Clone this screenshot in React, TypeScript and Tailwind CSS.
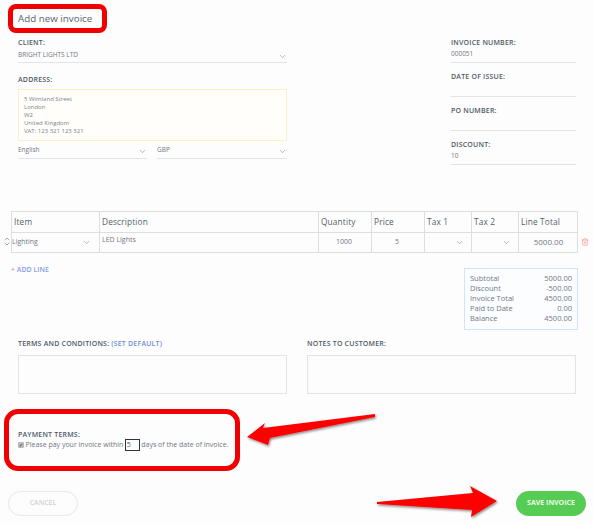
import { ChevronDown, ChevronUp, Trash2 } from "lucide-react";

const labelCls = "h-[10px] text-[7px] leading-[12px] font-semibold tracking-[0.2px] text-[#4f5a66]";
const valueCls = "text-[6.5px] leading-[12px] text-[#727884]";

function Field({ label, value }: { label: string; value?: string }) {
  return (
    <div className="mb-[8px]">
      <div className={labelCls}>{label}</div>
      <div className={`h-[16px] border-b border-[#e4e4e4] pt-[1px] ${valueCls}`}>{value}</div>
    </div>
  );
}

function SelectLine({ value, className }: { value: string; className: string }) {
  return (
    <div className={`flex h-[18px] items-center justify-between border-b border-[#e4e4e4] pt-[1px] ${className}`}>
      <span className={valueCls}>{value}</span>
      <ChevronDown size={9} strokeWidth={1.2} className="mt-[3px] text-[#666]" />
    </div>
  );
}

const headers = ["Item", "Description", "Quantity", "Price", "Tax 1", "Tax 2", "Line Total"];
const totals = [
  ["Subtotal", "5000.00"],
  ["Discount", "-500.00"],
  ["Invoice Total", "4500.00"],
  ["Paid to Date", "0.00"],
  ["Balance", "4500.00"],
];

export default function App() {
  const cell = "flex items-center border-r border-[#dedede] last:border-r-0";
  return (
    <div className="relative h-[523px] w-[594px] overflow-hidden bg-[#fdfdfd] font-['Open_Sans',sans-serif]">
      <div className="pl-[18px] pt-[12px]">
        <h1 className="h-[14px] text-[9.8px] leading-[14px] font-normal text-[#5a6470]">Add new invoice</h1>
      </div>

      <div className="mt-[11px] flex pl-[18px]">
        <div className="w-[269px]">
          <div className={labelCls}>CLIENT:</div>
          <div className="flex h-[16px] items-center justify-between border-b border-[#e4e4e4]">
            <span className={valueCls}>BRIGHT LIGHTS LTD</span>
            <ChevronDown size={9} strokeWidth={1.2} className="mt-[3px] text-[#666]" />
          </div>
          <div className={`mt-[11px] ${labelCls}`}>ADDRESS:</div>
          <div className="mt-[5px] h-[52px] border border-[#fcefc9] bg-[#fffefa] pl-[5px] pt-[5px] text-[6px] leading-[8px] text-[#7c8490]">
            <div>5 Wimland Street</div>
            <div>London</div>
            <div>W2</div>
            <div>United Kingdom</div>
            <div>VAT: 123 321 123 321</div>
          </div>
          <div className="flex gap-[10px]">
            <SelectLine value="English" className="w-[129px]" />
            <SelectLine value="GBP" className="w-[130px]" />
          </div>
        </div>
        <div className="ml-[164px] w-[125px]">
          <Field label="INVOICE NUMBER:" value="000051" />
          <Field label="DATE OF ISSUE:" />
          <Field label="PO NUMBER:" />
          <Field label="DISCOUNT:" value="10" />
        </div>
      </div>

      <div className="relative ml-[11px] mt-[38px] w-[567px] border border-[#dedede]">
        <div className="grid h-[21px] grid-cols-[88px_219px_53px_53px_47px_47px_59px] border-b border-[#dedede]">
          {headers.map((h) => (
            <div key={h} className={`${cell} pl-[2px] text-[8.3px] font-medium tracking-[0.15px] text-[#555d66]`}>{h}</div>
          ))}
        </div>
        <div className="grid h-[19px] grid-cols-[88px_219px_53px_53px_47px_47px_59px] text-[7px] text-[#727884]">
          <div className={`${cell} justify-between pb-[1px] pr-[8px]`}>
            <span>Lighting</span>
            <ChevronDown size={9} strokeWidth={1.2} className="text-[#666]" />
          </div>
          <div className={`${cell} !items-start pl-[2px] pt-[2px]`}>LED Lights</div>
          <div className={`${cell} justify-center pb-[1px] pr-[2px]`}>1000</div>
          <div className={`${cell} justify-center pb-[1px] pr-[2px]`}>5</div>
          <div className={`${cell} justify-end pb-[1px] pr-[7px]`}>
            <ChevronDown size={9} strokeWidth={1.2} className="text-[#666]" />
          </div>
          <div className={`${cell} justify-end pb-[1px] pr-[7px]`}>
            <ChevronDown size={9} strokeWidth={1.2} className="text-[#666]" />
          </div>
          <div className={`${cell} justify-center pb-[1px] text-[8px]`}>5000.00</div>
        </div>
        <div className="absolute left-[-9px] top-[23px] flex flex-col text-[#555]">
          <ChevronUp size={8} strokeWidth={1.5} className="-mb-[3px]" />
          <ChevronDown size={8} strokeWidth={1.5} />
        </div>
        <Trash2 size={8} strokeWidth={1.8} className="absolute right-[-12px] top-[26px] text-[#f29488]" />
      </div>

      <div className="mt-[11px] flex items-start justify-between pl-[11px] pr-[16px]">
        <div className="pt-[1px] text-[7px] leading-[10px] font-semibold text-[#8c9be6]">
          <span className="text-[#e58a8a]">+</span> ADD LINE
        </div>
        <div className="mt-[4px] h-[62px] w-[114px] border border-[#cfe4fa] bg-[#fbfdff] px-[5px] pt-[4px] text-[7.5px] leading-[10px] text-[#727884]">
          {totals.map(([k, v]) => (
            <div key={k} className="flex justify-between">
              <span>{k}</span>
              <span>{v}</span>
            </div>
          ))}
        </div>
      </div>

      <div className="mt-[8px] flex gap-[20px] pl-[18px]">
        <div className="w-[269px]">
          <div className={labelCls}>
            TERMS AND CONDITIONS: <span className="text-[#6f8fd8]">(SET DEFAULT)</span>
          </div>
          <div className="mt-[7px] h-[39px] border border-[#e4e4e4]" />
        </div>
        <div className="w-[269px]">
          <div className={labelCls}>NOTES TO CUSTOMER:</div>
          <div className="mt-[7px] h-[39px] border border-[#e4e4e4]" />
        </div>
      </div>

      <div className="mt-[35px] pl-[18px]">
        <div className={labelCls}>PAYMENT TERMS:</div>
        <div className="flex h-[12px] items-center text-[7px] text-[#727884]">
          <span className="flex h-[6px] w-[6px] items-center justify-center rounded-[1px] bg-[#bbb] text-[5px] leading-none text-[#222]">✓</span>
          <span className="ml-[1.5px]">Please pay your invoice within</span>
          <span className="mx-[1.5px] h-[12px] w-[15px] border border-[#2b3440] pl-[1px] leading-[10px] text-[#555]">5</span>
          <span>days of the date of invoice.</span>
        </div>
      </div>

      <div className="mt-[40px] flex justify-between pl-[8px] pr-[8px]">
        <button className="h-[25px] w-[70px] rounded-full border border-[#e8e8e8] text-[7px] font-semibold text-[#d2d2d2]">CANCEL</button>
        <button className="h-[25px] w-[70px] rounded-full bg-[#57cc55] text-[7px] font-bold text-[#eafbe6]">SAVE INVOICE</button>
      </div>

      <div className="absolute left-[8px] top-[4px] h-[29px] w-[99px] rounded-[8px] border-[5px] border-[#f00000]" />
      <div className="absolute left-[4px] top-[409px] h-[62px] w-[236px] rounded-[14px] border-[5px] border-[#f00000]" />
      <svg className="absolute left-0 top-0" width="594" height="523" viewBox="0 0 594 523">
        <defs>
          <filter id="arrowShadow" x="-20%" y="-50%" width="140%" height="200%">
            <feDropShadow dx="1" dy="1.5" stdDeviation="1" floodColor="#000" floodOpacity="0.45" />
          </filter>
        </defs>
        <polygon filter="url(#arrowShadow)" fill="#fe0000" points="247,437 265,423 263,428 375,414 375,417 270,438 268,445" />
        <polygon filter="url(#arrowShadow)" fill="#fe0000" points="377,502 473,493 470,486 497,501 471,517 472,510 377,504" />
      </svg>
    </div>
  );
}
